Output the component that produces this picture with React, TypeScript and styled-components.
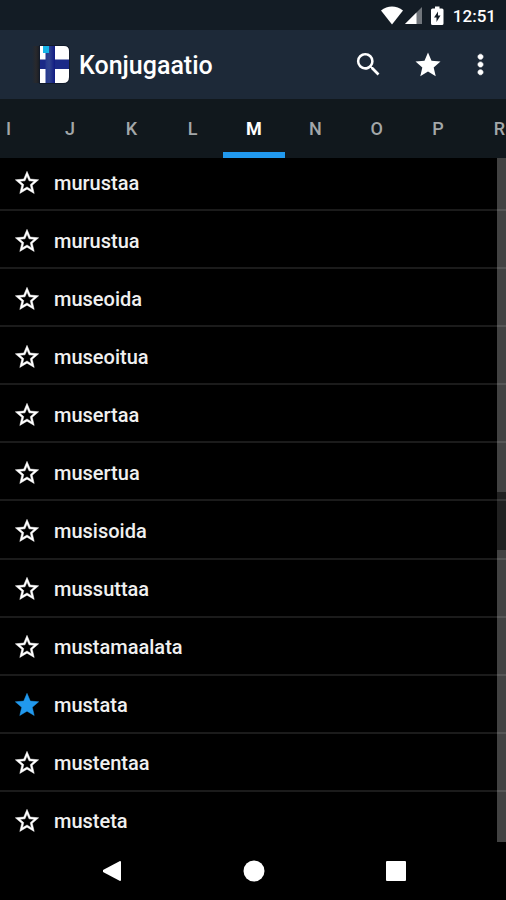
import React, { useState } from "react";
import styled, { createGlobalStyle } from "styled-components";

const Global = createGlobalStyle`
  * { box-sizing: border-box; }
  html, body, #root { height: 100%; }
  body { margin: 0; background: #000; font-family: Roboto, sans-serif; color: #fff; }
  button { border: 0; padding: 0; background: none; color: inherit; font: inherit; cursor: pointer; }
  a { color: inherit; text-decoration: none; }
  svg { display: block; }
`;

const Screen = styled.div`
  display: flex;
  flex-direction: column;
  height: 100vh;
  overflow: hidden;
`;

const StatusBar = styled.div`
  display: flex;
  flex: none;
  align-items: center;
  justify-content: flex-end;
  height: 30px;
  padding-right: 10px;
  padding-top: 2px;
  background: #131c25;
`;

const Clock = styled.time`
  margin-left: 8px;
  font-size: 17px;
  font-weight: 500;
  line-height: 24px;
`;

const AppBar = styled.header`
  display: flex;
  flex: none;
  align-items: center;
  height: 69px;
  padding: 0 4px 0 30px;
  background: #1d2938;
`;

const Title = styled.h1`
  flex: 1;
  margin: 0;
  padding: 2px 0 0 9px;
  font-size: 25px;
  font-weight: 500;
  line-height: 32px;
`;

const Actions = styled.div`
  display: flex;
  align-items: center;
`;

const IconButton = styled.button<{ $width: number }>`
  display: flex;
  align-items: center;
  justify-content: center;
  width: ${(p) => p.$width}px;
  height: 48px;
`;

const TabClip = styled.nav`
  flex: none;
  overflow: hidden;
  background: #11181d;
`;

const Tabs = styled.div`
  display: grid;
  grid-template-columns: repeat(9, 1fr);
  height: 59px;
  margin: 0 -24px 0 -22px;
`;

const Tab = styled.button<{ $active: boolean }>`
  padding-top: 6px;
  border-bottom: 6px solid ${(p) => (p.$active ? "#2199ee" : "transparent")};
  color: ${(p) => (p.$active ? "#fff" : "#a3a7a9")};
  font-size: 18px;
  font-weight: ${(p) => (p.$active ? 700 : 500)};
`;

const ListArea = styled.main`
  position: relative;
  flex: 1;
  min-height: 0;
  overflow: hidden;
`;

const WordList = styled.ul`
  display: grid;
  grid-auto-rows: minmax(58px, 1fr);
  height: calc(100% + 13px);
  margin: -5px 0 0;
  padding: 0;
  list-style: none;
`;

const WordRow = styled.li`
  display: flex;
  align-items: center;
  padding: 3px 0 0 13px;
  border-bottom: 2px solid #1b1b1b;
`;

const StarButton = styled.button<{ $on: boolean }>`
  color: ${(p) => (p.$on ? "#2199ee" : "#fff")};
`;

const Word = styled.a`
  flex: 1;
  padding-left: 13px;
  color: #f0f0f0;
  font-size: 20px;
  font-weight: 500;
  line-height: 24px;
`;

const ScrollTrack = styled.div`
  position: absolute;
  top: 0;
  right: 0;
  bottom: 0;
  display: flex;
  flex-direction: column;
  width: 9px;
`;

const ScrollPart = styled.div<{ $grow: number; $light?: boolean }>`
  flex: ${(p) => p.$grow} 0 0;
  background: rgba(255, 255, 255, ${(p) => (p.$light ? 0.26 : 0.13)});
`;

const SystemNav = styled.footer`
  display: grid;
  flex: none;
  grid-template-columns: 1fr 142px 142px 142px 1fr;
  height: 58px;
  padding-left: 2px;
  background: #000;
`;

const NavButton = styled.button<{ $column: number }>`
  display: flex;
  grid-column: ${(p) => p.$column};
  align-items: center;
  justify-content: center;
`;

const STAR = "M12 17.27 18.18 21l-1.64-7.03L22 9.24l-7.19-.61L12 2 9.19 8.63 2 9.24l5.46 4.73L5.82 21z";
const STAR_OUTLINE =
  "M22 9.24l-7.19-.62L12 2 9.19 8.63 2 9.24l5.46 4.73L5.82 21 12 17.27 18.18 21l-1.63-7.03L22 9.24zM12 15.4l-3.76 2.27 1-4.28-3.32-2.88 4.38-.38L12 6.1l1.71 4.04 4.38.38-3.32 2.88 1 4.28L12 15.4z";
const SEARCH =
  "M15.5 14h-.79l-.28-.27A6.471 6.471 0 0 0 16 9.5 6.5 6.5 0 1 0 9.5 16c1.61 0 3.09-.59 4.23-1.57l.27.28v.79l5 4.99L20.49 19l-4.99-5zm-6 0C7.01 14 5 11.99 5 9.5S7.01 5 9.5 5 14 7.01 14 9.5 11.99 14 9.5 14z";
const MORE =
  "M12 8c1.1 0 2-.9 2-2s-.9-2-2-2-2 .9-2 2 .9 2 2 2zm0 2c-1.1 0-2 .9-2 2s.9 2 2 2 2-.9 2-2-.9-2-2-2zm0 6c-1.1 0-2 .9-2 2s.9 2 2 2 2-.9 2-2-.9-2-2-2z";

const Glyph = ({ d, size, stroke = 0 }: { d: string; size: number; stroke?: number }) => (
  <svg
    width={size}
    height={size}
    viewBox="0 0 24 24"
    fill="currentColor"
    stroke="currentColor"
    strokeWidth={stroke}
    aria-hidden="true"
  >
    <path d={d} />
  </svg>
);

const StatusIcons = () => (
  <svg width="64" height="20" viewBox="0 0 64 20" fill="#fff" aria-hidden="true">
    <path d="M0 4.5C6.5-1 15.500-1 22 4.500L11 18.500z" />
    <path d="M41 1v17H24z" opacity=".4" />
    <path d="M35.500 6.500V18H24z" />
    <path
      fillRule="evenodd"
      d="M54 .5h4.500v2H61q1.500 0 1.500 1.500v13.500q0 1.500-1.500 1.500h-9.500q-1.500 0-1.500-1.500V4q0-1.500 1.500-1.500H54zM57 5.500l-4 6h2.500V16l4-6.500H57z"
    />
  </svg>
);

const Logo = () => (
  <svg width="40" height="40" viewBox="0 0 40 40" aria-hidden="true">
    <defs>
      <linearGradient id="shade">
        <stop offset="0" stopColor="#29292c" stopOpacity="0" />
        <stop offset=".5" stopColor="#29292c" />
        <stop offset="1" stopColor="#171b24" />
      </linearGradient>
      <linearGradient id="cross">
        <stop offset="0" stopColor="#26398f" />
        <stop offset=".4" stopColor="#30438e" />
        <stop offset="1" stopColor="#101a82" />
      </linearGradient>
      <clipPath id="flag">
        <path d="M10 1h24q5 0 5 5v26q0 6-6 6H10z" />
      </clipPath>
    </defs>
    <path d="M2 1h8v37H2z" fill="url(#shade)" />
    <path d="M9 0h25q6 0 6 6v26q0 7-7 7H9z" fill="#111a2a" />
    <g clipPath="url(#flag)">
      <path d="M10 1h30v37H10z" fill="#fff" />
      <path d="M10 14.500h30V24H10z" fill="#1b2a87" />
      <path d="M15.500 1h9.500v37h-9.500z" fill="url(#cross)" />
      <path d="M13 1h6v7h-6z" fill="#16b4e8" />
    </g>
  </svg>
);

const LETTERS = ["I", "J", "K", "L", "M", "N", "O", "P", "R"];
const WORDS = [
  "murustaa", "murustua", "museoida", "museoitua", "musertaa", "musertua",
  "musisoida", "mussuttaa", "mustamaalata", "mustata", "mustentaa", "musteta",
];

export default function App() {
  const [letter, setLetter] = useState("M");
  const [starred, setStarred] = useState<string[]>(["mustata"]);
  const toggle = (word: string) =>
    setStarred((s) => (s.includes(word) ? s.filter((w) => w !== word) : [...s, word]));

  return (
    <Screen>
      <Global />
      <StatusBar>
        <StatusIcons />
        <Clock>12:51</Clock>
      </StatusBar>
      <AppBar>
        <Logo />
        <Title>Konjugaatio</Title>
        <Actions>
          <IconButton $width={60} aria-label="Search"><Glyph d={SEARCH} size={31} /></IconButton>
          <IconButton $width={60} aria-label="Favourites"><Glyph d={STAR} size={30} /></IconButton>
          <IconButton $width={44} aria-label="More options"><Glyph d={MORE} size={31} stroke={0.5} /></IconButton>
        </Actions>
      </AppBar>
      <TabClip>
        <Tabs role="tablist">
          {LETTERS.map((l) => (
            <Tab key={l} role="tab" aria-selected={l === letter} $active={l === letter} onClick={() => setLetter(l)}>
              {l}
            </Tab>
          ))}
        </Tabs>
      </TabClip>
      <ListArea>
        <WordList>
          {WORDS.map((word) => {
            const on = starred.includes(word);
            return (
              <WordRow key={word}>
                <StarButton $on={on} aria-pressed={on} aria-label={`Star ${word}`} onClick={() => toggle(word)}>
                  <Glyph d={on ? STAR : STAR_OUTLINE} size={28} stroke={0.4} />
                </StarButton>
                <Word href={`#${word}`}>{word}</Word>
              </WordRow>
            );
          })}
        </WordList>
        <ScrollTrack>
          <ScrollPart $grow={334} $light />
          <ScrollPart $grow={58} />
          <ScrollPart $grow={292} $light />
        </ScrollTrack>
      </ListArea>
      <SystemNav>
        <NavButton $column={2} aria-label="Back">
          <svg width="20" height="22" viewBox="0 0 20 22" fill="#fff"><path d="M18 1q1 0 1 1v18q0 1-1 1L1 12v-2z" /></svg>
        </NavButton>
        <NavButton $column={3} aria-label="Home">
          <svg width="22" height="22" viewBox="0 0 22 22" fill="#fff"><circle cx="11" cy="11" r="10.500" /></svg>
        </NavButton>
        <NavButton $column={4} aria-label="Recent apps">
          <svg width="20" height="20" viewBox="0 0 20 20" fill="#fff"><rect width="20" height="20" rx="1" /></svg>
        </NavButton>
      </SystemNav>
    </Screen>
  );
}
